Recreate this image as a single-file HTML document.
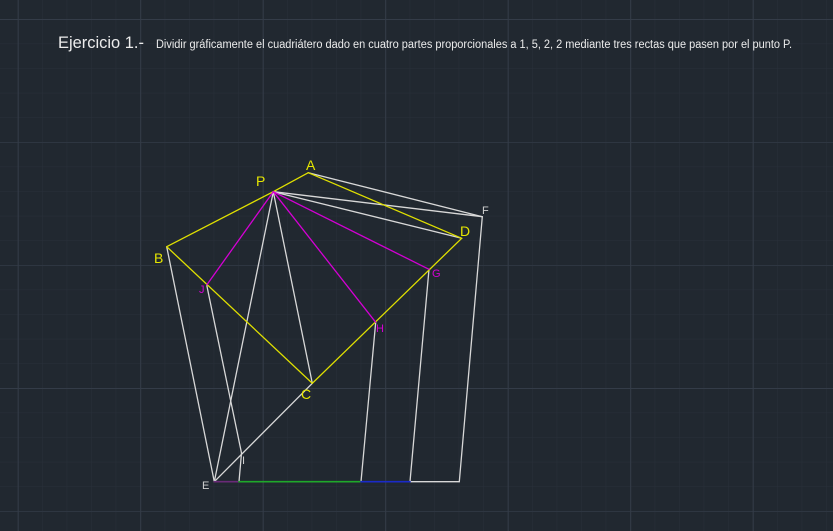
<!DOCTYPE html>
<html><head><meta charset="utf-8"><style>
html,body{margin:0;padding:0;background:#212830;width:833px;height:531px;overflow:hidden}
svg{display:block}
</style></head><body>
<svg width="833" height="531" viewBox="0 0 833 531" xmlns="http://www.w3.org/2000/svg">
<defs>
<pattern id="minor" x="17.7" y="19" width="24.5" height="24.6" patternUnits="userSpaceOnUse">
<path d="M0 0V24.6M0 0H24.5" stroke="#29303a" stroke-width="1" fill="none"/>
</pattern>
<pattern id="major" x="17.7" y="19" width="122.5" height="123" patternUnits="userSpaceOnUse">
<path d="M0.5 0V123M0 0.5H122.5" stroke="#343c48" stroke-width="1" fill="none"/>
</pattern>
</defs>
<rect width="833" height="531" fill="#212830"/>
<rect width="833" height="531" fill="url(#minor)"/>
<rect width="833" height="531" fill="url(#major)"/>

<text x="58" y="48" font-family="Liberation Sans, sans-serif" font-size="17" fill="#ececec" textLength="86" lengthAdjust="spacingAndGlyphs">Ejercicio 1.-</text>
<text x="156" y="48" font-family="Liberation Sans, sans-serif" font-size="11.5" fill="#ececec" textLength="636" lengthAdjust="spacingAndGlyphs">Dividir gráficamente el cuadriátero dado en cuatro partes proporcionales a 1, 5, 2, 2 mediante tres rectas que pasen por el punto P.</text>

<g stroke-width="1.3" fill="none" stroke-linecap="round">
<g stroke="#d8d8d8">
<line x1="308.3" y1="172.7" x2="482.3" y2="216.7"/>
<line x1="273.3" y1="191.7" x2="482.3" y2="216.7"/>
<line x1="273.3" y1="191.7" x2="461.7" y2="238.3"/>
<line x1="273.3" y1="191.7" x2="312.3" y2="383.3"/>
<line x1="273.3" y1="191.7" x2="214.3" y2="481.7"/>
<line x1="166.7" y1="246.7" x2="214.3" y2="481.7"/>
<line x1="206.7" y1="285" x2="241.5" y2="453"/>
<line x1="241.5" y1="453" x2="239" y2="481.7"/>
<line x1="214.3" y1="481.7" x2="312.3" y2="383.3"/>
<line x1="375.7" y1="322.3" x2="361" y2="481.7"/>
<line x1="429" y1="269.3" x2="410" y2="481.7"/>
<line x1="482.3" y1="216.7" x2="459.3" y2="481.7"/>
<line x1="410" y1="481.7" x2="459.3" y2="481.7"/>
</g>
<g stroke="#e0e000">
<line x1="273.3" y1="191.7" x2="308.3" y2="172.7"/>
<line x1="308.3" y1="172.7" x2="461.7" y2="238.3"/>
<line x1="273.3" y1="191.7" x2="166.7" y2="246.7"/>
<line x1="166.7" y1="246.7" x2="312.3" y2="383.3"/>
<line x1="312.3" y1="383.3" x2="461.7" y2="238.3"/>
</g>
<g stroke="#d400d4">
<line x1="273.3" y1="191.7" x2="206.7" y2="285"/>
<line x1="273.3" y1="191.7" x2="375.7" y2="322.3"/>
<line x1="273.3" y1="191.7" x2="429" y2="269.3"/>
</g>
<line x1="214.3" y1="481.7" x2="239" y2="481.7" stroke="#6a2a78" stroke-width="1.6"/>
<line x1="239" y1="481.7" x2="361" y2="481.7" stroke="#1fa82a" stroke-width="1.6"/>
<line x1="361" y1="481.7" x2="410" y2="481.7" stroke="#1a2ac8" stroke-width="1.6"/>
</g>

<g font-family="Liberation Sans, sans-serif" font-size="14">
<text x="306" y="170" fill="#e6e600">A</text>
<text x="256" y="186" fill="#e6e600">P</text>
<text x="154" y="263" fill="#e6e600">B</text>
<text x="301" y="399" fill="#e6e600">C</text>
<text x="460" y="236" fill="#e6e600">D</text>
<text x="482" y="214" fill="#d0d0d0" font-size="11">F</text>
<text x="432" y="277" fill="#d400d4" font-size="11">G</text>
<text x="376" y="332" fill="#d400d4" font-size="11">H</text>
<text x="199" y="293" fill="#d400d4" font-size="11">J</text>
<text x="242" y="464" fill="#d0d0d0" font-size="11">I</text>
<text x="202" y="489" fill="#d0d0d0" font-size="11">E</text>
</g>
</svg>
</body></html>
